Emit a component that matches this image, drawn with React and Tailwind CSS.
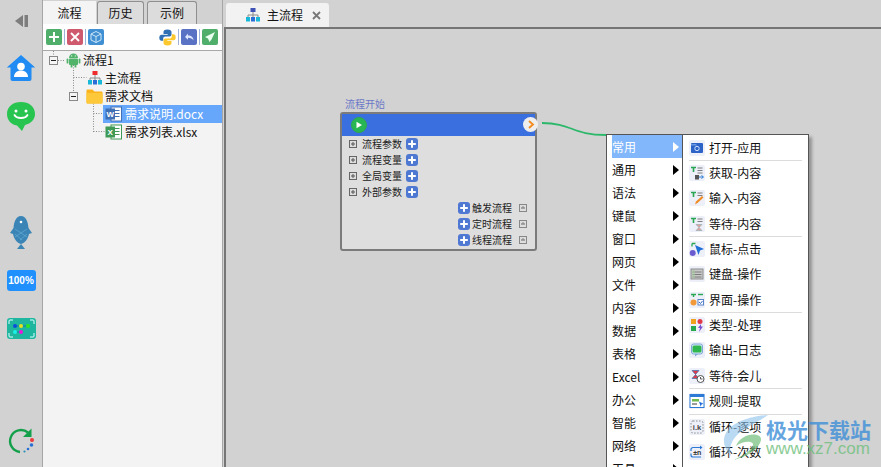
import React from "react";

const Plus = () => (
  <span className="flex h-[12px] w-[12px] items-center justify-center rounded-[3px] bg-[#4f78d2]">
    <svg width="10" height="10" viewBox="0 0 10 10"><path d="M5 1.2v7.6M1.2 5h7.6" stroke="#fff" strokeWidth="2" /></svg>
  </span>
);
const Box = () => (
  <svg width="8" height="8" viewBox="0 0 8 8" className="shrink-0"><rect x=".5" y=".5" width="7" height="7" fill="none" stroke="#666" /><path d="M2 4h4M4 2v4" stroke="#555" /></svg>
);
const BoxMinus = () => (
  <svg width="8" height="8" viewBox="0 0 8 8" className="shrink-0"><rect x=".5" y=".5" width="7" height="7" fill="none" stroke="#888" /><path d="M2 4h4" stroke="#666" /><path d="M4 2v2" stroke="#888" /></svg>
);
const Expander = () => (
  <svg width="9" height="9" viewBox="0 0 9 9" className="shrink-0"><rect x=".5" y=".5" width="8" height="8" fill="#f5f5f5" stroke="#888" /><path d="M2 4.5h5" stroke="#222" /></svg>
);

const Org = ({ top = "#ef2b2b" }) => (
  <svg width="16" height="16" viewBox="0 0 16 16">
    <rect x="5.5" y="1" width="5" height="4" fill={top} />
    <path d="M8 5v3M3 10V8h10v2M8 8v2" stroke="#8a8a8a" fill="none" />
    <rect x="1" y="10" width="4" height="4.5" fill="#18b8d8" />
    <rect x="6" y="10" width="4" height="4.5" fill="#2a6fd6" />
    <rect x="11" y="10" width="4" height="4.5" fill="#18b8d8" />
  </svg>
);

const Android = () => (
  <svg width="15" height="16" viewBox="0 0 15 16">
    <path d="M3 6a4.5 4.5 0 0 1 9 0z" fill="#4fb36a" />
    <rect x="3" y="6.6" width="9" height="6.4" rx="1" fill="#4fb36a" />
    <rect x=".6" y="6.6" width="1.8" height="5" rx=".9" fill="#4fb36a" />
    <rect x="12.6" y="6.6" width="1.8" height="5" rx=".9" fill="#4fb36a" />
    <rect x="4.6" y="12" width="1.9" height="3.6" rx=".9" fill="#4fb36a" />
    <rect x="8.5" y="12" width="1.9" height="3.6" rx=".9" fill="#4fb36a" />
    <circle cx="5.7" cy="3.9" r=".6" fill="#fff" /><circle cx="9.3" cy="3.9" r=".6" fill="#fff" />
  </svg>
);

const Folder = () => (
  <svg width="17" height="16" viewBox="0 0 17 16">
    <path d="M.5 2.5a1 1 0 0 1 1-1h5l2 2h7a1 1 0 0 1 1 1v10a1 1 0 0 1-1 1h-14a1 1 0 0 1-1-1z" fill="#fbb41e" />
    <path d="M.5 5h16v9.500a1 1 0 0 1-1 1h-14a1 1 0 0 1-1-1z" fill="#fdc83a" />
  </svg>
);

const Office = ({ c, l }) => (
  <svg width="17" height="16" viewBox="0 0 17 16">
    <rect x="6" y="1" width="10.500" height="14" fill="#fff" stroke={c} />
    <path d="M9 4.500h5.500M9 7.500h5.500M9 10.500h5.500" stroke={c} />
    <rect x="0.500" y="2.500" width="9.500" height="11" fill={c} />
    <text x="5.200" y="11" fontSize="8" fontWeight="700" fill="#fff" textAnchor="middle" fontFamily="Liberation Sans">{l}</text>
  </svg>
);

const TreeRow = ({ children, cls = "" }) => (
  <div className={`flex h-[18px] items-center ${cls}`}>{children}</div>
);

const Tool = ({ bg, children }) => (
  <span className="flex h-[16px] w-[16px] items-center justify-center rounded-[2px]" style={{ background: bg }}>
    <svg width="14" height="14" viewBox="0 0 14 14">{children}</svg>
  </span>
);
const Sep = () => <span className="h-[16px] w-px bg-[#9db4d8]" />;

const Rail = () => (
  <div className="flex w-[43px] shrink-0 flex-col items-center border-r border-[#a6a6a6]">
    <svg width="16" height="14" viewBox="0 0 16 14" className="mt-[14px]">
      <path d="M10 1L2 7l8 6z" fill="#7d7d7d" /><rect x="11.500" y="1" width="3.500" height="12" fill="#7d7d7d" />
    </svg>
    <svg width="30" height="28" viewBox="0 0 30 28" className="mt-[26px]">
      <path d="M15 1L.8 13.500h3.700V25a2 2 0 0 0 2 2h17a2 2 0 0 0 2-2V13.500h3.700z" fill="#1f8bf3" />
      <circle cx="15" cy="12.500" r="3.800" fill="#fff" />
      <path d="M8 23c0-4 3-6.500 7-6.500s7 2.500 7 6.500z" fill="#fff" />
    </svg>
    <svg width="28" height="29" viewBox="0 0 28 29" className="mt-[20px]">
      <path d="M14 0C6 0 0 4.500 0 12c0 6 4 10.500 10 11.500L15 29l3-6c6-1.500 10-5.500 10-11C28 4.500 22 0 14 0z" fill="#27c44f" />
      <circle cx="9" cy="9" r="1.500" fill="#fff" /><circle cx="19" cy="9" r="1.500" fill="#fff" />
      <path d="M7.500 13c2 4 11 4 13 0" stroke="#fff" strokeWidth="1.800" fill="none" strokeLinecap="round" />
    </svg>
    <svg width="22" height="33" viewBox="0 0 22 33" className="mt-[85px]">
      <path d="M11 0C6 0 4 6 3.500 12L0 17l3 1c1 5 4 9 8 10 4-1 7-5 8-10l3-1-3.500-5C18 6 16 0 11 0z" fill="#3a85b6" />
      <path d="M7 33l4-5 4 5z" fill="#3a85b6" />
      <circle cx="11" cy="6" r="1.300" fill="#fff" />
      <path d="M5 13l12 8M17 13L5 21M5 18l7 6M17 18l-7 6" stroke="#5ea6cf" strokeWidth=".8" />
    </svg>
    <span className="mt-[21px] flex h-[21px] w-[29px] items-center justify-center rounded-[3px] bg-[#2190ff] font-['Liberation_Sans',sans-serif] text-[10px] font-bold text-white">100%</span>
    <span className="relative mt-[27px] flex h-[21px] w-[29px] flex-col justify-center gap-[2px] rounded-[3px] bg-[#1fb69f] pl-[6px]">
      <svg width="22" height="14" viewBox="0 0 22 14" className="-ml-[1px]">
        <path d="M2 4h12M2 10h6" stroke="#1976a8" />
        <circle cx="3" cy="4" r="2" fill="#0b4fd8" /><circle cx="9" cy="4" r="2" fill="#e8e21c" /><circle cx="16" cy="4" r="2" fill="#2ce51f" />
        <circle cx="3" cy="10" r="2" fill="#19f0e8" /><circle cx="9" cy="10" r="2" fill="#ee16dc" />
      </svg>
      <svg width="29" height="21" viewBox="0 0 29 21" className="absolute left-0 top-0">
        <path d="M2 6V3a1 1 0 0 1 1-1h3M23 2h3a1 1 0 0 1 1 1v3M27 15v3a1 1 0 0 1-1 1h-3M6 19H3a1 1 0 0 1-1-1v-3" stroke="#dff" fill="none" />
      </svg>
    </span>
    <svg width="28" height="28" viewBox="0 0 28 28" className="mt-[88px]">
      <path d="M21 5.500A11 11 0 1 0 13 25" stroke="#14a04a" strokeWidth="2.400" fill="none" />
      <path d="M24.500 1.500v8.500h-8.500z" fill="#14a04a" />
      <circle cx="25" cy="13" r="2" fill="#ee3a3a" /><circle cx="24.500" cy="18" r="1.800" fill="#2a6fd6" />
      <circle cx="21" cy="22" r="1.300" fill="#2a6fd6" /><circle cx="17.500" cy="24.500" r="1.100" fill="#2a8fb6" />
    </svg>
  </div>
);

const Panel = () => (
  <div className="flex w-[180px] shrink-0 flex-col border-r border-[#a6a6a6]">
    <div className="flex h-[24px] items-end text-[12px] text-[#111]">
      <span className="flex h-[23px] w-[53px] items-center justify-center bg-[#f4f4f4]">流程</span>
      <span className="ml-[1px] flex h-[23px] w-[47px] items-center justify-center rounded-t-[3px] border border-b-0 border-[#8f8f8f] bg-[#dcdcdc]">历史</span>
      <span className="ml-[3px] flex h-[23px] w-[50px] items-center justify-center rounded-t-[3px] border border-b-0 border-[#8f8f8f] bg-[#dcdcdc]">示例</span>
    </div>
    <div className="flex h-[26px] items-center bg-white pl-[3px] pr-[4px]">
      <span className="flex items-center gap-[2px]">
        <Tool bg="#4fae6a"><path d="M7 2v10M2 7h10" stroke="#fff" strokeWidth="2" /></Tool><Sep />
        <Tool bg="#cf5a6e"><path d="M3 3l8 8M11 3l-8 8" stroke="#fff" strokeWidth="1.800" /></Tool><Sep />
        <Tool bg="#3f8fd2"><path d="M7 1.500l5 2.500v6l-5 2.500L2 10V4zM2 4l5 2.500L12 4M7 6.500v6" stroke="#cfe6f8" fill="none" /></Tool>
      </span>
      <span className="ml-auto flex items-center gap-[2px]">
        <svg width="17" height="17" viewBox="0 0 17 17">
          <path d="M8.500.5c-3 0-4 1-4 2.500v2h4.200v.7H2.500C1 5.700.3 7 .3 8.800s.8 3 2.200 3h1.700V9.700c0-1.500 1-2.300 2.300-2.300h4c1.200 0 2-.9 2-2V3c0-1.500-1.300-2.500-4-2.500z" fill="#2f6fb3" />
          <path d="M8.500 16.500c3 0 4-1 4-2.500v-2H8.300v-.7h6.200c1.500 0 2.200-1.300 2.200-3.100s-.8-3-2.200-3h-1.700v2.100c0 1.500-1 2.300-2.300 2.300h-4c-1.200 0-2 .9-2 2v2.400c0 1.500 1.300 2.500 4 2.500z" fill="#fbc92d" />
        </svg>
        <Sep />
        <Tool bg="#5a72c4"><path d="M3 7l3-3.500v2c3.500 0 5.500 2 5.500 5-1-2-3-2.800-5.500-2.800v2z" fill="#dfe6ff" /></Tool><Sep />
        <Tool bg="#4fae6a"><path d="M12 2L2 7l3 1.500L6.500 12l2-2.500z" fill="#e9fff0" /></Tool>
      </span>
    </div>
    <div className="relative flex-1 border-t border-[#a8a8a8] bg-[#f3f3f3] text-[12px] leading-none text-[#111]">
      <svg width="120" height="90" viewBox="0 0 120 90" className="absolute left-0 top-0">
        <path d="M10.500 0v5M15 9.500h7M30.500 14v28M30.500 26.500h13M50.500 50v31M50.500 62.500h11M50.500 80.500h11" stroke="#888" strokeDasharray="1 1.500" fill="none" />
      </svg>
      <div className="relative">
        <TreeRow cls="pl-[6px]"><Expander /><span className="ml-[8px]"><Android /></span><span className="ml-[2px]">流程1</span></TreeRow>
        <TreeRow cls="pl-[44px]"><Org /><span className="ml-[2px]">主流程</span></TreeRow>
        <TreeRow cls="pl-[26px]"><Expander /><span className="ml-[8px]"><Folder /></span><span className="ml-[2px]">需求文档</span></TreeRow>
        <TreeRow cls="ml-[60px] bg-[#66a7fb] pl-[2px] text-white"><Office c="#3f6fb5" l="W" /><span className="ml-[3px]">需求说明.docx</span></TreeRow>
        <TreeRow cls="ml-[60px] pl-[2px]"><Office c="#3f9a55" l="X" /><span className="ml-[3px]">需求列表.xlsx</span></TreeRow>
      </div>
    </div>
  </div>
);

const ParamRow = ({ label }) => (
  <div className="flex h-[16px] items-center pl-[7px]">
    <Box /><span className="ml-[5px]">{label}</span><span className="ml-[4px]"><Plus /></span>
  </div>
);
const FlowRow = ({ label }) => (
  <div className="flex h-[16px] items-center justify-end pr-[8px]">
    <Plus /><span className="ml-[2px]">{label}</span><span className="ml-[7px]"><BoxMinus /></span>
  </div>
);

const FlowNode = () => (
  <div className="absolute left-[114px] top-[67px] w-[197px]">
    <div className="h-[16px] pl-[5px] text-[10px] leading-[16px] text-[#6b78c8]">流程开始</div>
    <div className="relative h-[139px] rounded-[3px] border-2 border-[#7b7b7b] bg-[#dedede] text-[10px] leading-none text-[#222]">
      <div className="flex h-[22px] items-center bg-[#3a6fe0] pl-[9px]">
        <span className="flex h-[16px] w-[16px] items-center justify-center rounded-full border border-[#2fa84f] bg-[#27b653]">
          <svg width="8" height="8" viewBox="0 0 8 8"><path d="M1.500 0.800L7 4 1.500 7.200z" fill="#fff" /></svg>
        </span>
      </div>
      <span className="absolute -right-[3px] top-[3px] flex h-[15px] w-[15px] items-center justify-center rounded-full bg-[#eeeeee]">
        <svg width="8" height="9" viewBox="0 0 8 9"><path d="M2 1l4 3.500L2 8" stroke="#f28a1c" strokeWidth="1.800" fill="none" /></svg>
      </span>
      <div>
        <ParamRow label="流程参数" />
        <ParamRow label="流程变量" />
        <ParamRow label="全局变量" />
        <ParamRow label="外部参数" />
        <FlowRow label="触发流程" />
        <FlowRow label="定时流程" />
        <FlowRow label="线程流程" />
      </div>
    </div>
  </div>
);

const leftItems = ["常用", "通用", "语法", "键鼠", "窗口", "网页", "文件", "内容", "数据", "表格", "Excel", "办公", "智能", "网络", "工具"];

const ic = {
  open: <><rect x="2" y="3" width="12" height="10" rx="1" fill="#2c63c6" /><path d="M2 4h5l1 1.500H2z" fill="#6b97e4" /><circle cx="8" cy="8.500" r="2.200" fill="none" stroke="#cfe0ff" /></>,
  get: <><path d="M2 2.500h5M4.500 2.500V7" stroke="#29a651" strokeWidth="1.600" /><path d="M8.500 3h5M8.500 5.500h5M8.500 8h5" stroke="#7d7d7d" /><rect x="6" y="10" width="4" height="4.500" fill="#555" /><path d="M10 12h4M12.500 10.500L14.500 12l-2 1.500" stroke="#2c7ad6" fill="none" /></>,
  input: <><path d="M2 2.500h5M4.500 2.500V7" stroke="#29a651" strokeWidth="1.600" /><path d="M8.500 3h5M8.500 5.500h5" stroke="#7d7d7d" /><path d="M6 14.500l1-3 6-5.500 1.500 1.500-6 5.500z" fill="#f08a24" /></>,
  wait: <><path d="M2 2.500h5M4.500 2.500V7" stroke="#29a651" strokeWidth="1.600" /><path d="M8.500 3h5M8.500 5.500h5" stroke="#7d7d7d" /><path d="M7 8.500h6l-3 3 3 3H7l3-3z" fill="#e5a0a0" stroke="#8aa" strokeWidth=".6" /></>,
  mouse: <><path d="M6 4l9 4-4 1.500L9.500 14z" fill="#1f6fd6" /><path d="M3 2.500h3.500M3 2.500v3" stroke="#29a651" strokeWidth="1.300" /><circle cx="3.700" cy="12" r="3" fill="#6b5bd0" /></>,
  key: <><rect x="2" y="3" width="12" height="10" fill="#c9c9c9" stroke="#8c8c8c" /><path d="M3.500 6h9M3.500 8.500h9M3.500 11h9" stroke="#7b7b7b" /><rect x="3" y="4" width="3" height="8" fill="#a6c9a0" opacity=".6" /></>,
  ui: <><path d="M2 2.500h5M4.500 2.500V5" stroke="#29a651" strokeWidth="1.400" /><path d="M9 2.500h5" stroke="#29a651" strokeWidth="1.400" /><circle cx="4.500" cy="10.500" r="3" fill="#f29a3a" /><rect x="9" y="7.500" width="5.500" height="5.500" fill="#fff" stroke="#5b83c8" /><path d="M10 10l1.500 1.500L13.500 9" stroke="#2c63c6" fill="none" /></>,
  type: <><rect x="2" y="2" width="5" height="5" fill="#f0a21c" /><rect x="2" y="9" width="5" height="5" fill="#27a84f" /><circle cx="11" cy="4.500" r="2.500" fill="#e0394a" /><path d="M12 7l-3 4h2l-1 4 4-5.500h-2z" fill="#7a4fd0" /></>,
  log: <><rect x="2.500" y="2" width="11" height="10" rx="2" fill="#d5e6f8" stroke="#7fa9d6" /><rect x="3.500" y="3.500" width="9" height="7" rx="1.500" fill="#2fb84f" /><path d="M6 12v2.500L9 12z" fill="#7fa9d6" /></>,
  sleep: <><path d="M3 2.500h7l-3.500 4 3.500 4H3l3.500-4z" fill="#e0394a" stroke="#3a6fb0" strokeWidth=".7" /><circle cx="11.500" cy="11" r="3.500" fill="#fff" stroke="#555" /><path d="M11.500 9v2h2" stroke="#555" fill="none" /></>,
  rule: <><rect x="1" y="1.500" width="14" height="13" fill="#fff" stroke="#2c7ad6" /><rect x="1" y="1.500" width="14" height="2.500" fill="#2c7ad6" /><rect x="3" y="6" width="7" height="2.500" fill="#6fb84f" /><rect x="3" y="10" width="5" height="2" fill="#9a9a9a" /><path d="M10 8.500l4.500 2.300-2 .7-.8 2.200z" fill="#1f6fd6" /></>,
  loop1: <><rect x="2" y="2" width="12" height="12" rx="2" fill="none" stroke="#8c8c8c" strokeDasharray="1.500 1.500" /><text x="8" y="11" fontSize="7.500" fontWeight="700" fill="#444" textAnchor="middle" fontFamily="Liberation Sans">i.k</text></>,
  loop2: <><path d="M2 7V5.500a2 2 0 0 1 2-2h8.500M2 9.500v1.500a2 2 0 0 0 2 2h8" stroke="#2c7ad6" fill="none" strokeWidth="1.200" /><path d="M11 1.500l2.500 2-2.500 2z" fill="#2c7ad6" /><text x="8.300" y="11" fontSize="7" fontWeight="700" fill="#333" textAnchor="middle" fontFamily="Liberation Sans">±n</text></>,
};

const rightItems = [
  ["打开-应用", "open"], ["获取-内容", "get", 1], ["输入-内容", "input"], ["等待-内容", "wait"],
  ["鼠标-点击", "mouse", 1], ["键盘-操作", "key"], ["界面-操作", "ui"],
  ["类型-处理", "type", 1], ["输出-日志", "log"], ["等待-会儿", "sleep"],
  ["规则-提取", "rule", 1], ["循环-逐项", "loop1", 1], ["循环-次数", "loop2"],
];

const Menu = () => (
  <div className="absolute left-[380px] top-[105px] flex h-[345px] w-[203px] border border-[#555] bg-white text-[12px] leading-none text-[#111] shadow-[3px_3px_3px_rgba(0,0,0,0.3)]">
    <div className="w-[76px] shrink-0 border-r border-[#555] pl-[5px]">
      {leftItems.map((t, i) => (
        <div key={t} className={`flex h-[23px] items-center justify-between pr-[3px] ${i === 0 ? "bg-[#82b7fb] text-white" : ""}`}>
          <span>{t}</span>
          <svg width="6" height="10" viewBox="0 0 6 10"><path d="M0 0l6 5-6 5z" fill={i === 0 ? "#fff" : "#000"} /></svg>
        </div>
      ))}
    </div>
    <div className="flex-1 px-[6px]">
      {rightItems.map(([t, k, sep]) => (
        <div key={t} className={`flex h-[25.33px] items-center ${sep ? "border-t border-[#dcdcdc]" : ""}`}>
          <span className="flex h-[16px] w-[16px] items-center justify-center rounded-[2px] bg-[#edf0f8]">
            <svg width="16" height="16" viewBox="0 0 16 16">{ic[k]}</svg>
          </span>
          <span className="ml-[4px]">{t}</span>
        </div>
      ))}
    </div>
  </div>
);

const Watermark = () => (
  <div className="pointer-events-none absolute bottom-[10px] right-[10px] flex items-center opacity-80">
    <svg width="46" height="46" viewBox="0 0 46 46" className="-my-[4px] mr-[-3px]">
      <path d="M45 0C30 1 10 6 3 18c-5 9 0 18 5 23C5 31 10 21 22 14 30 9 38 5 45 0z" fill="#8cc0ea" opacity=".75" />
      <path d="M13 31c3-8 13-13 21-11 4 1 5 4 3 8-4 8-14 14-27 17 10-4 18-9 20-15 1-4-9-5-17 1z" fill="#6fbd78" opacity=".85" />
    </svg>
    <div className="flex flex-col">
      <span className="whitespace-nowrap text-[21px] font-bold leading-[21px] text-[#3f8fd8]">极光下载站</span>
      <span className="font-['Liberation_Sans',sans-serif] whitespace-nowrap text-[17px] leading-[17px] text-[#6fc07c]">www.xz7.com</span>
    </div>
  </div>
);

export default function App() {
  return (
    <div className="flex h-[467px] w-[881px] overflow-hidden bg-[#d2d2d2] font-['Noto_Sans_CJK_SC','Liberation_Sans',sans-serif]">
      <Rail />
      <Panel />
      <div className="flex min-w-0 flex-1 flex-col pl-[1px]">
        <div className="flex h-[27px] items-end pl-[2px]">
          <div className="flex h-[24px] w-[103px] items-center rounded-t-[3px] bg-[#f2f2f2] pl-[19px] text-[12px] leading-none text-[#111]">
            <Org top="#3f51b5" />
            <span className="ml-[6px]">主流程</span>
            <svg width="9" height="9" viewBox="0 0 9 9" className="ml-[9px]"><path d="M1 1l7 7M8 1L1 8" stroke="#777" strokeWidth="1.800" /></svg>
          </div>
        </div>
        <div className="relative flex-1 border-l-2 border-t-2 border-[#757575] bg-[#d2d2d2]">
          <FlowNode />
          <svg width="70" height="16" viewBox="0 0 70 16" className="absolute left-[316px] top-[92px]">
            <path d="M0 2c30 0 30 12 64 12h6" stroke="#2cb86a" strokeWidth="1.800" fill="none" />
          </svg>
          <Menu />
        </div>
      </div>
      <Watermark />
    </div>
  );
}
